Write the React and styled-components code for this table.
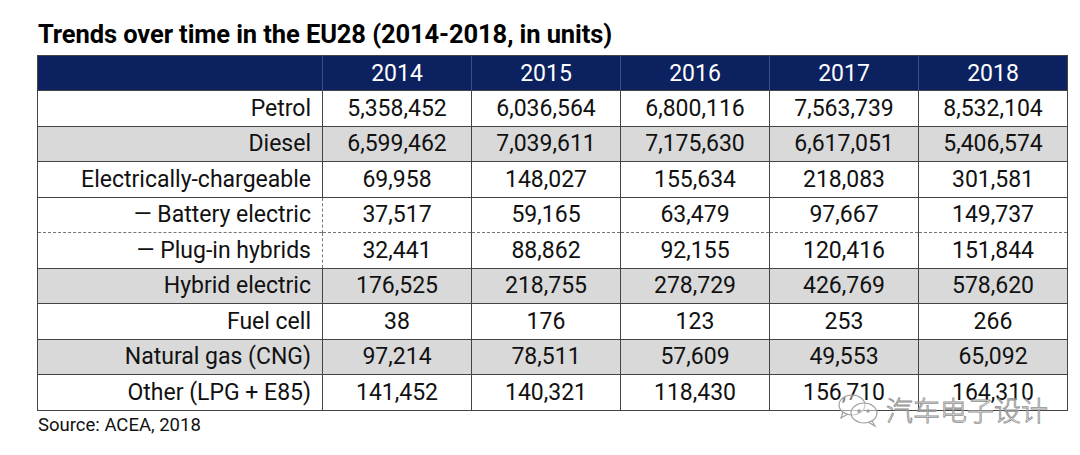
import React from "react";
import styled, { createGlobalStyle } from "styled-components";

const GlobalStyle = createGlobalStyle`
  html, body {
    margin: 0;
    padding: 0;
    background: #fff;
  }
  body {
    font-family: Roboto, "Liberation Sans", sans-serif;
    color: #111;
  }
`;

const years = ["2014", "2015", "2016", "2017", "2018"];

const rows = [
  { label: "Petrol", values: ["5,358,452", "6,036,564", "6,800,116", "7,563,739", "8,532,104"] },
  { label: "Diesel", shade: true, values: ["6,599,462", "7,039,611", "7,175,630", "6,617,051", "5,406,574"] },
  { label: "Electrically-chargeable", values: ["69,958", "148,027", "155,634", "218,083", "301,581"] },
  { label: "— Battery electric", dashed: "bottom", values: ["37,517", "59,165", "63,479", "97,667", "149,737"] },
  { label: "— Plug-in hybrids", dashed: "top", values: ["32,441", "88,862", "92,155", "120,416", "151,844"] },
  { label: "Hybrid electric", shade: true, values: ["176,525", "218,755", "278,729", "426,769", "578,620"] },
  { label: "Fuel cell", values: ["38", "176", "123", "253", "266"] },
  { label: "Natural gas (CNG)", shade: true, values: ["97,214", "78,511", "57,609", "49,553", "65,092"] },
  { label: "Other (LPG + E85)", values: ["141,452", "140,321", "118,430", "156,710", "164,310"] },
];

const Page = styled.div`
  position: relative;
  width: 1080px;
  height: 455px;
  padding: 19px 0 0 37px;
  box-sizing: border-box;
`;

const Title = styled.h1`
  margin: 0 0 5px 1px;
  font-size: 25.5px;
  font-weight: 700;
  line-height: 31px;
  letter-spacing: -0.1px;
  color: #000;
`;

const Table = styled.table`
  border-collapse: collapse;
  width: 1026px;
  table-layout: fixed;
  font-size: 23px;
  border: 1.5px solid #444;
`;

const HeadCell = styled.th`
  height: 34px;
  padding: 0;
  background: #0b2160;
  color: #fff;
  font-weight: 400;
  text-align: center;
  border-left: 1px solid #3a4f85;
  width: ${(p) => p.$width}px;
  &:first-child {
    border-left: none;
  }
`;

const Row = styled.tr`
  height: 35.5px;
  background: ${(p) => (p.$shade ? "#d9d9d9" : "#fff")};
  border-top: 1.5px ${(p) => (p.$dashed === "top" ? "dashed #777" : "solid #444")};
`;

const Label = styled.td`
  padding: 0 11px 0 0;
  text-align: right;
  white-space: nowrap;
  border-right: 1.5px ${(p) => (p.$dashed ? "dashed #777" : "solid #444")};
`;

const Value = styled.td`
  padding: 0;
  text-align: center;
  border-left: 1.5px solid #444;
  &:nth-child(2) {
    border-left: 1.5px ${(p) => (p.$dashed ? "dashed #777" : "solid #444")};
  }
`;

const Source = styled.div`
  margin: 3px 0 0 1px;
  font-size: 18.5px;
  color: #111;
`;

const Watermark = styled.div`
  position: absolute;
  left: 836px;
  top: 390px;
  display: flex;
  align-items: center;
  gap: 4px;
  pointer-events: none;
`;

const MarkText = styled.span`
  font-family: "Noto Sans CJK SC", sans-serif;
  font-size: 27px;
  font-weight: 300;
  letter-spacing: 0;
  color: rgba(255, 255, 255, 0.45);
  -webkit-text-stroke: 0.8px #8f8f8f;
`;

function WeChatMark() {
  return (
    <svg width="46" height="38" viewBox="0 0 46 38" fill="none" stroke="#a0a0a0" strokeWidth="1.2">
      <ellipse cx="16" cy="14" rx="13" ry="10" fill="rgba(255,255,255,0.45)" />
      <path d="M7 21 L5 27 L12 23" />
      <ellipse cx="28" cy="22" rx="13" ry="10" fill="rgba(255,255,255,0.45)" />
      <path d="M36 30 L39 35 L32 31" />
      <circle cx="23" cy="20" r="1.2" fill="#a0a0a0" />
      <circle cx="32" cy="20" r="1.2" fill="#a0a0a0" />
    </svg>
  );
}

export default function App() {
  return (
    <Page>
      <GlobalStyle />
      <Title>Trends over time in the EU28 (2014-2018, in units)</Title>
      <Table>
        <thead>
          <tr>
            <HeadCell $width={284} />
            {years.map((y) => (
              <HeadCell key={y} $width={148}>
                {y}
              </HeadCell>
            ))}
          </tr>
        </thead>
        <tbody>
          {rows.map((r) => (
            <Row key={r.label} $shade={r.shade} $dashed={r.dashed}>
              <Label $dashed={!!r.dashed}>{r.label}</Label>
              {r.values.map((v, i) => (
                <Value key={i} $dashed={!!r.dashed}>
                  {v}
                </Value>
              ))}
            </Row>
          ))}
        </tbody>
      </Table>
      <Source>Source: ACEA, 2018</Source>
      <Watermark>
        <WeChatMark />
        <MarkText>汽车电子设计</MarkText>
      </Watermark>
    </Page>
  );
}
